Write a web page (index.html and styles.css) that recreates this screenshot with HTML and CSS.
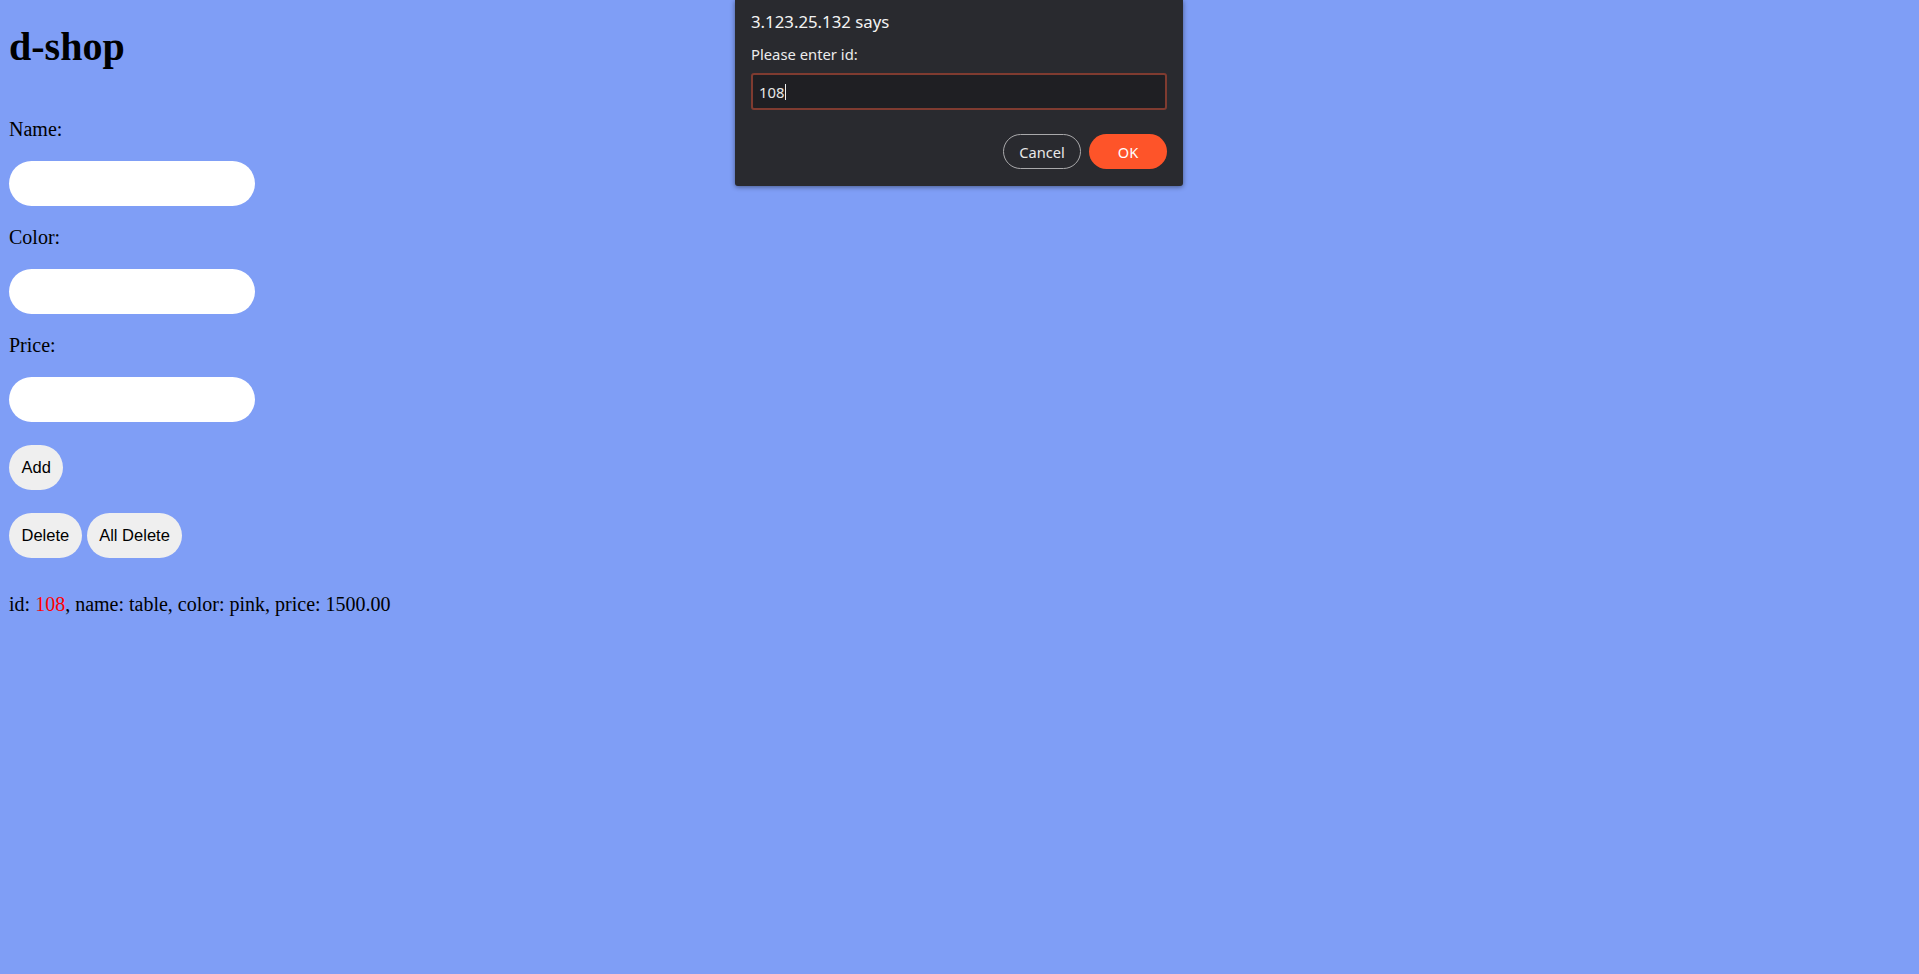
FILE: index.html
```html
<!DOCTYPE html>
<html lang="en">
<head>
<meta charset="utf-8">
<title>d-shop</title>
<link rel="stylesheet" href="styles.css">
</head>
<body>
<main class="page">
  <h1 class="title">d-shop</h1>
  <div class="form">
    <div class="field">
      <label class="label" for="name">Name:</label>
      <input class="input" id="name" type="text">
    </div>
    <div class="field">
      <label class="label" for="color">Color:</label>
      <input class="input" id="color" type="text">
    </div>
    <div class="field">
      <label class="label" for="price">Price:</label>
      <input class="input" id="price" type="text">
    </div>
  </div>
  <div class="actions">
    <div class="row"><button class="btn" type="button">Add</button></div>
    <div class="row"><button class="btn" type="button">Delete</button><button class="btn" type="button">All Delete</button></div>
  </div>
  <p class="result">id: <span class="id">108</span>, name: table, color: pink, price: 1500.00</p>
</main>

<div class="dialog" role="dialog">
  <div class="dialog-title">3.123.25.132 says</div>
  <div class="dialog-msg">Please enter id:</div>
  <div class="dialog-input"><span class="dialog-value">108</span><span class="caret"></span></div>
  <div class="dialog-buttons">
    <button class="dbtn cancel" type="button">Cancel</button>
    <button class="dbtn ok" type="button">OK</button>
  </div>
</div>
</body>
</html>
```

FILE: styles.css
```css
html, body {
  margin: 0;
  padding: 0;
}
body {
  background: #7f9ef6;
  font-family: "Liberation Serif", "Times New Roman", serif;
  color: #000;
  min-height: 974px;
}
.page {
  padding: 24px 9px 0;
  display: flex;
  flex-direction: column;
  align-items: flex-start;
}
.title {
  margin: 0;
  font-size: 40px;
  line-height: 46px;
  font-weight: bold;
}
.form {
  margin-top: 48px;
  display: flex;
  flex-direction: column;
  gap: 20px;
}
.field {
  display: flex;
  flex-direction: column;
  gap: 20px;
}
.label {
  font-size: 20px;
  line-height: 23px;
}
.input {
  display: block;
  box-sizing: border-box;
  width: 246px;
  height: 45px;
  border: none;
  border-radius: 22.5px;
  background: #fff;
  padding: 0 14px;
  margin: 0;
  outline: none;
}
.actions {
  margin-top: 23px;
  display: flex;
  flex-direction: column;
  gap: 23px;
}
.row {
  display: flex;
  gap: 5px;
}
.btn {
  height: 45px;
  box-sizing: border-box;
  padding: 0 12.5px;
  border: none;
  border-radius: 22.5px;
  background: #efefef;
  color: #000;
  font-family: "Liberation Sans", Arial, sans-serif;
  font-size: 16.5px;
  margin: 0;
}
.result {
  margin: 34.5px 0 0;
  font-size: 20px;
  line-height: 23px;
}
.id {
  color: #ff0000;
}

/* native prompt overlay */
.dialog {
  position: absolute;
  top: 0;
  left: 735px;
  width: 448px;
  box-sizing: border-box;
  padding: 9.5px 16px 17px;
  background: #292a2f;
  box-shadow: 0 1px 5px rgba(0, 0, 0, 0.45);
  border-radius: 0 0 3px 3px;
  font-family: "Noto Sans", "Open Sans", sans-serif;
  color: #ececec;
}
.dialog-title {
  font-size: 16.8px;
  line-height: 24px;
  color: #f3f3f3;
}
.dialog-msg {
  margin-top: 9px;
  font-size: 14.8px;
  line-height: 22px;
  color: #ececec;
}
.dialog-input {
  margin-top: 8.5px;
  height: 37px;
  box-sizing: border-box;
  border: 2px solid #7f3b30;
  border-radius: 3px;
  background: #1f1f23;
  display: flex;
  align-items: center;
  padding-left: 6px;
  font-size: 14.8px;
  color: #e6e6e6;
}
.caret {
  width: 1px;
  height: 16px;
  background: #f0f0f0;
  margin-left: 1px;
}
.dialog-buttons {
  margin-top: 24px;
  display: flex;
  justify-content: flex-end;
  gap: 8px;
}
.dbtn {
  width: 78px;
  height: 35px;
  box-sizing: border-box;
  border-radius: 17.5px;
  font-family: "Noto Sans", "Open Sans", sans-serif;
  font-size: 14.6px;
  margin: 0;
  padding: 0;
}
.cancel {
  background: transparent;
  border: 1px solid #a9a9ab;
  color: #e8e8e8;
}
.ok {
  background: #fe5429;
  border: none;
  color: #fff;
}
```
